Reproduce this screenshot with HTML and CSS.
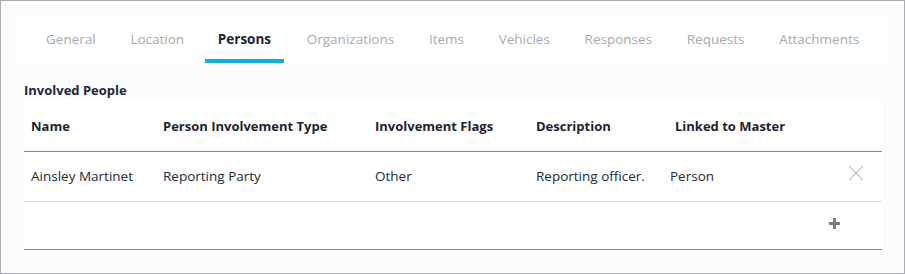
FILE: index.html
```html
<!DOCTYPE html>
<html lang="en">
<head>
  <meta charset="UTF-8" />
  <title>Incident - Persons</title>
  <link rel="stylesheet" href="styles.css">
</head>
<body>
  <div class="frame">
    <nav class="tabs">
      <a class="tab">General</a>
      <a class="tab">Location</a>
      <a class="tab active">Persons</a>
      <a class="tab">Organizations</a>
      <a class="tab">Items</a>
      <a class="tab">Vehicles</a>
      <a class="tab">Responses</a>
      <a class="tab">Requests</a>
      <a class="tab">Attachments</a>
    </nav>

    <h2 class="section-title">Involved People</h2>

    <div class="grid">
      <div class="row head">
        <div class="cell">Name</div>
        <div class="cell">Person Involvement Type</div>
        <div class="cell">Involvement Flags</div>
        <div class="cell">Description</div>
        <div class="cell linked">Linked to Master</div>
        <div class="cell"></div>
      </div>
      <div class="row data">
        <div class="cell">Ainsley Martinet</div>
        <div class="cell">Reporting Party</div>
        <div class="cell">Other</div>
        <div class="cell">Reporting officer.</div>
        <div class="cell">Person</div>
        <div class="cell action">
          <svg width="16" height="16" viewBox="0 0 16 16"><path d="M1 1L15 15M15 1L1 15" stroke="#c9c9cc" stroke-width="1.2" fill="none"/></svg>
        </div>
      </div>
      <div class="row add">
        <svg class="plus" width="11" height="11" viewBox="0 0 11 11"><path d="M5.5 0V11M0 5.5H11" stroke="#767b85" stroke-width="3" fill="none"/></svg>
      </div>
    </div>
  </div>
</body>
</html>
```

FILE: styles.css
```css
html, body {
  margin: 0;
  height: 100%;
}
body {
  font-family: 'Open Sans', 'Lato', sans-serif;
  font-size: 13px;
  color: #212a38;
  background: #ffffff;
}
.frame {
  box-sizing: border-box;
  height: 274px;
  border: 1px solid #a9adb3;
  background: #fcfcfc;
  padding: 14px 16px 0 16px;
}
.tabs {
  display: flex;
  height: 48px;
  background: #ffffff;
  padding-left: 15px;
  margin-right: -1px;
}
.tab {
  display: flex;
  align-items: center;
  padding: 0 14px;
  margin-right: 6.7px;
  font-size: 13.5px;
  color: #a7aab0;
  border-bottom: 4px solid transparent;
  box-sizing: border-box;
  padding-top: 4px;
}
.tab.active {
  color: #1b2433;
  font-weight: bold;
  border-bottom-color: #0fb0ea;
  padding: 4px 13px 0 13px;
  margin-right: 8.7px;
}
.section-title {
  margin: 18px 0 0 7px;
  font-size: 13px;
  font-weight: bold;
  color: #1d2739;
  line-height: 18px;
}
.grid {
  margin: 3px 6px 0 7px;
  background: #ffffff;
  border-bottom: 1px solid #84878d;
}
.row {
  display: grid;
  grid-template-columns: 132px 212px 161px 134px 1fr 60px;
  height: 49px;
  align-items: center;
  border-bottom: 1px solid #dedede;
}
.row.head {
  border-bottom-color: #868a90;
  font-weight: bold;
  color: #1b2433;
  padding-bottom: 1px;
  box-sizing: border-box;
  height: 50px;
}
.row.data {
  font-size: 13.5px;
  padding-bottom: 1px;
  box-sizing: border-box;
  height: 50px;
}
.cell {
  padding-left: 7px;
}
.cell.linked {
  padding-left: 12px;
}
.action {
  display: flex;
  justify-content: center;
  padding-left: 8px;
  margin-top: -6px;
}
.row.add {
  display: flex;
  justify-content: flex-end;
  border-bottom: none;
  height: 47px;
  padding-right: 42px;
}
.plus {
  margin-top: -4px;
}
```
